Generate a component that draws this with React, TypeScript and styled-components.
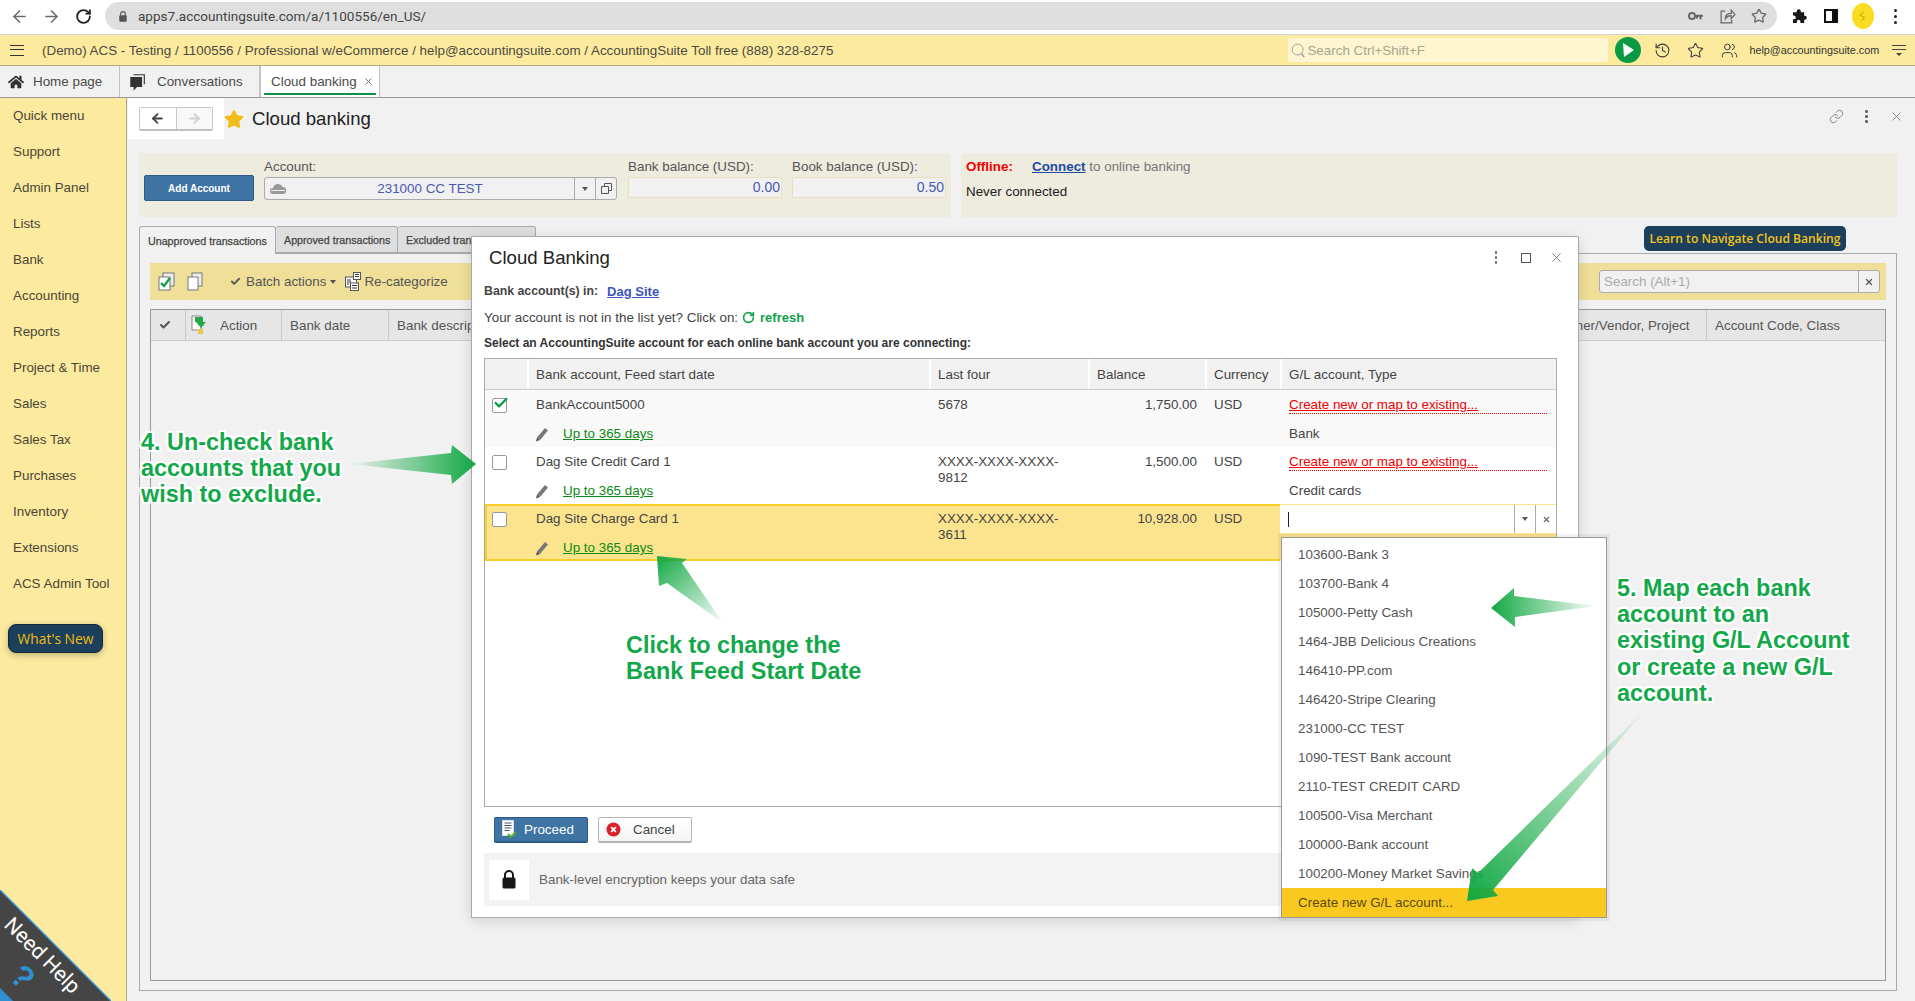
import { FC, ReactNode } from 'react'
import styled, { createGlobalStyle } from 'styled-components'
import { ArrowLeft, ArrowRight, Check, History, Link, RotateCw, Star, Users, X } from 'lucide-react'
import { FaHome, FaStar } from 'react-icons/fa'

const GlobalStyle = createGlobalStyle`
  html, body {
    margin: 0;
    padding: 0;
    background: #f1f1f1;
  }
  * { box-sizing: border-box; }
  body {
    font-family: "Liberation Sans", Arial, sans-serif;
    font-size: 13.4px;
    color: #444;
  }
`

const Page = styled.div`
  position: relative;
  width: 1915px;
  height: 1001px;
  display: flex;
  flex-direction: column;
  overflow: hidden;
`

/* browser chrome */
const BrowserBar = styled.div`
  height: 35px;
  flex: none;
  background: #fff;
  border-bottom: 1px solid #d4d4d4;
  display: flex;
  align-items: flex-start;
  padding: 2px 0 0 10px;
`
const NavIcon = styled.span<{ $w?: number; $dark?: boolean }>`
  width: ${(p) => p.$w ?? 32}px;
  height: 28px;
  flex: none;
  display: flex;
  align-items: center;
  justify-content: center;
  color: ${(p) => (p.$dark ? '#222' : '#6a6a6a')};
`
const NavIcons = styled.div`
  display: flex;
  width: 95px;
  flex: none;
  margin-left: -7px;
`
const AddressPill = styled.div`
  width: 1672px;
  height: 28px;
  flex: none;
  background: #dfdfdf;
  border-radius: 14px;
  display: flex;
  align-items: center;
  padding-left: 14px;
  margin-left: 7px;
`
const UrlText = styled.span`
  margin-left: 11px;
  font-size: 13.55px;
  font-family: Roboto, "Liberation Sans", sans-serif;
  color: #444;
`
const PillIcons = styled.div`
  margin-left: auto;
  display: flex;
  margin-right: 2px;
`
const ExtIcons = styled.div`
  display: flex;
  margin-left: 6px;
`
const SidePanelIcon = styled.span`
  width: 14px;
  height: 14px;
  border: 2.5px solid #111;
  border-right-width: 6px;
`
const Avatar = styled.span`
  width: 22px;
  height: 26px;
  border-radius: 50%;
  background: #fbdc22;
  display: flex;
  align-items: center;
  justify-content: center;
`
const KebabDots = styled.span<{ $color?: string; $size?: number }>`
  display: flex;
  flex-direction: column;
  gap: ${(p) => p.$size ?? 3}px;
  i {
    width: ${(p) => p.$size ?? 3}px;
    height: ${(p) => p.$size ?? 3}px;
    background: ${(p) => p.$color ?? '#222'};
    border-radius: 50%;
  }
`
const Kebab: FC<{ color?: string; size?: number }> = ({ color, size }) => (
  <KebabDots $color={color} $size={size}>
    <i />
    <i />
    <i />
  </KebabDots>
)

/* app top bar */
const TopBar = styled.div`
  height: 31px;
  flex: none;
  background: #fcea9f;
  border-bottom: 1px solid #aaa68c;
  display: flex;
  align-items: center;
  padding-left: 10px;
`
const Hamburger = styled.span`
  width: 14px;
  height: 11px;
  flex: none;
  border-top: 1.5px solid #333;
  border-bottom: 1.5px solid #333;
  position: relative;
  &::after {
    content: '';
    position: absolute;
    left: 0;
    right: 0;
    top: 3.5px;
    border-top: 1.5px solid #333;
  }
`
const TopText = styled.span`
  margin-left: 18px;
  white-space: nowrap;
  color: #4c4a3f;
`
const GlobalSearch = styled.div`
  margin-left: 455px;
  width: 320px;
  height: 24px;
  flex: none;
  background: #fdf6d1;
  border-radius: 2px;
  display: flex;
  align-items: center;
  padding-left: 3px;
  color: #a8a68f;
  gap: 1px;
`
const PlayButton = styled.span`
  width: 26px;
  height: 26px;
  margin-left: 7px;
  flex: none;
  border-radius: 50%;
  background: #0a9a46;
  display: flex;
  align-items: center;
  justify-content: center;
`
const TopIcon = styled.span<{ $gap?: number }>`
  margin-left: ${(p) => p.$gap ?? 16}px;
  flex: none;
  display: flex;
  color: #3c3c3c;
`
const TopEmail = styled.span`
  margin-left: 11px;
  font-size: 10.8px;
  color: #333;
  white-space: nowrap;
`
const MenuLines = styled.span`
  margin-left: 13px;
  width: 14px;
  flex: none;
  display: flex;
  flex-direction: column;
  align-items: center;
  gap: 3px;
  b {
    width: 14px;
    border-top: 1.2px solid #444;
  }
  i {
    border-left: 3px solid transparent;
    border-right: 3px solid transparent;
    border-top: 3px solid #444;
  }
`

/* page tabs */
const TabRow = styled.div`
  height: 32px;
  flex: none;
  background: #f1f1f1;
  border-bottom: 1px solid #999;
  display: flex;
`
const PageTab = styled.div<{ $w: number; $gap: number; $active?: boolean }>`
  width: ${(p) => p.$w}px;
  flex: none;
  border-right: 1px solid #c4c4c4;
  display: flex;
  align-items: center;
  gap: ${(p) => p.$gap}px;
  padding-left: 8px;
  position: relative;
  background: ${(p) => (p.$active ? '#fff' : 'transparent')};
  color: #4a4a4a;
  ${(p) =>
    p.$active &&
    `border-left: 1px solid #c4c4c4;
     padding-left: 10px;
     box-shadow: inset 3px 0 #fff, inset -3px 0 #fff, inset 0 -2px #fff, inset 0 -4px #0b9446;`}
`
const TabClose = styled.span`
  display: flex;
  color: #666;
`

const Body = styled.div`
  flex: 1;
  min-height: 0;
  display: flex;
`
const Sidebar = styled.nav`
  width: 127px;
  flex: none;
  background: #fcea9f;
  border-right: 1px solid #b3a878;
  padding-left: 13px;
`
const SideItem = styled.div`
  height: 36px;
  padding-bottom: 2px;
  display: flex;
  align-items: center;
  color: #4a4636;
`
const WhatsNew = styled.div`
  margin: 22px 0 0 -5px;
  width: 95px;
  height: 29px;
  border-radius: 8px;
  background: #1c3f5c;
  border: 1px solid #14293c;
  box-shadow: 0 2px 6px rgba(0, 0, 0, 0.25);
  color: #f0bd10;
  font-family: "Open Sans", sans-serif;
  font-weight: 500;
  font-size: 13.8px;
  display: flex;
  align-items: center;
  justify-content: center;
`
const NeedHelpCorner = styled.div`
  position: absolute;
  left: 0;
  bottom: 0;
  width: 111px;
  height: 111px;
  &::before {
    content: '';
    position: absolute;
    inset: 0;
    background: #454545;
    clip-path: polygon(0 0, 100% 100%, 0 100%);
  }
  &::after {
    content: '';
    position: absolute;
    left: 0;
    bottom: 0;
    width: 13px;
    height: 13px;
    background: #2f8fd3;
    clip-path: polygon(0 0, 100% 100%, 0 100%);
  }
`
const NeedHelpEdge = styled.svg`
  position: absolute;
  left: 0;
  top: 0;
`
const NeedHelpText = styled.span`
  position: absolute;
  left: 8px;
  top: 22px;
  line-height: 18px;
  transform-origin: 0 50%;
  transform: rotate(45deg);
  color: #fff;
  font-size: 21px;
  font-family: Roboto, sans-serif;
  white-space: nowrap;
`
const NeedHelpMark = styled.span`
  position: absolute;
  left: 13px;
  top: 71px;
  transform: rotate(45deg);
  color: #2f8fd3;
  font-size: 32px;
  font-weight: bold;
  line-height: 1;
`

const Main = styled.main`
  flex: 1;
  min-width: 0;
  display: flex;
  flex-direction: column;
  padding: 0 18px 10px 12px;
`
const TitleRow = styled.div`
  height: 55px;
  flex: none;
  display: flex;
  align-items: flex-start;
`
const BackBox = styled.div`
  width: 96px;
  height: 41px;
  margin-left: -11px;
  background: #fff;
  padding: 9px 0 0 11px;
  flex: none;
`
const BackGroup = styled.div`
  width: 74px;
  height: 24px;
  display: flex;
  background: #f8f8f8;
  border: 1px solid #c8c8c8;
  border-bottom: 2px solid #c0c0c0;
  border-radius: 2px;
`
const BackCell = styled.span<{ $off?: boolean }>`
  flex: 1;
  display: flex;
  align-items: center;
  justify-content: center;
  color: ${(p) => (p.$off ? '#d0d0d0' : '#444')};
  background: ${(p) => (p.$off ? 'transparent' : '#fff')};
  & + & {
    border-left: 1px solid #c8c8c8;
  }
`
const TitleStar = styled.span`
  margin: 11px 0 0 0;
  color: #f2bd1c;
  display: flex;
  flex: none;
`
const PageTitle = styled.h1`
  margin: 10px 0 0 8px;
  font-size: 18.6px;
  line-height: 22px;
  font-weight: normal;
  color: #222;
`
const TitleTools = styled.div`
  margin: 11px -7px 0 auto;
  display: flex;
  align-items: center;
  gap: 21.5px;
  color: #777;
`

const AccountRow = styled.div`
  height: 64px;
  flex: none;
  display: flex;
  gap: 10px;
`
const AccountPanel = styled.section`
  width: 812px;
  flex: none;
  background: #eeebdf;
  display: flex;
  padding: 4px 0 0 5px;
`
const AddAccountButton = styled.div`
  width: 110px;
  height: 26px;
  margin: 18px 10px 0 0;
  flex: none;
  background: #3f75a5;
  border: 1px solid #2c5a84;
  border-radius: 2px;
  color: #fff;
  font-size: 10px;
  font-weight: bold;
  display: flex;
  align-items: center;
  justify-content: center;
`
const Field = styled.div<{ $w: number; $gap?: number }>`
  width: ${(p) => p.$w}px;
  margin-right: ${(p) => p.$gap ?? 10}px;
  flex: none;
`
const FieldLabel = styled.div`
  height: 18px;
  line-height: 18px;
  margin: 1px 0;
  color: #555;
`
const AccountSelect = styled.div`
  height: 23px;
  display: flex;
  align-items: center;
  border: 1px solid #aaa;
  border-radius: 3px;
  background: #f1f1f1;
`
const CloudBadge = styled.span`
  width: 16px;
  margin-left: 5px;
  flex: none;
  display: flex;
  color: #888;
`
const AccountName = styled.span`
  flex: 1;
  text-align: center;
  color: #4a58b0;
  font-size: 13.4px;
`
const SelectCell = styled.span<{ $w: number }>`
  width: ${(p) => p.$w}px;
  height: 100%;
  flex: none;
  border-left: 1px solid #aaa;
  display: flex;
  align-items: center;
  justify-content: center;
  color: #666;
`
const Caret = styled.i`
  border-left: 3px solid transparent;
  border-right: 3px solid transparent;
  border-top: 4px solid #555;
`
const AmountBox = styled.div`
  height: 21px;
  background: #f1f1f1;
  border: 1px solid #e8e0bd;
  color: #4a58b0;
  font-size: 14px;
  line-height: 19px;
  text-align: right;
  padding-right: 1px;
`
const StatusPanel = styled.section`
  flex: 1;
  background: #eeebdf;
  padding: 5px 5px;
`
const StatusLine = styled.div`
  height: 18px;
  line-height: 18px;
  margin-bottom: 7px;
  color: #222;
`
const OfflineLabel = styled.span`
  color: #f00000;
  font-weight: bold;
  display: inline-block;
  width: 66px;
`
const ConnectLink = styled.a`
  color: #1d4aa3;
  font-weight: bold;
  text-decoration: underline;
`
const StatusHint = styled.span`
  color: #777;
`

const TabsLine = styled.div`
  height: 28px;
  margin-top: 9px;
  flex: none;
  display: flex;
  position: relative;
`
const DataTab = styled.div<{ $w: number; $active?: boolean }>`
  width: ${(p) => p.$w}px;
  flex: none;
  height: ${(p) => (p.$active ? 28 : 27)}px;
  border: 1px solid #aaa;
  border-left-width: ${(p) => (p.$active ? 1 : 0)}px;
  border-bottom-width: ${(p) => (p.$active ? 0 : 1)}px;
  border-radius: 3px 3px 0 0;
  background: ${(p) => (p.$active ? '#f1f1f1' : '#dedede')};
  position: relative;
  z-index: 1;
  display: flex;
  align-items: center;
  padding-left: 8px;
  font-size: 10.7px;
  -webkit-text-stroke: 0.25px #444;
  white-space: nowrap;
  overflow: hidden;
`
const LearnButton = styled.div`
  margin-left: auto;
  margin-right: 51px;
  width: 202px;
  height: 25px;
  background: #1c3f5c;
  border-radius: 5px;
  color: #f5c518;
  font-family: "Open Sans", sans-serif;
  font-weight: 600;
  font-size: 12.1px;
  display: flex;
  align-items: center;
  justify-content: center;
`
const ContentPanel = styled.section`
  flex: 1;
  min-height: 0;
  margin-top: -1px;
  border: 1px solid #aaa;
  padding: 9px 10px;
  display: flex;
  flex-direction: column;
`
const Toolbar = styled.div`
  height: 37px;
  flex: none;
  background: #f0df98;
  display: flex;
  align-items: center;
  padding-left: 8px;
  color: #555;
`
const ToolIcon = styled.span<{ $left?: number }>`
  margin-left: ${(p) => p.$left ?? 0}px;
  display: flex;
  flex: none;
`
const ToolText = styled.span<{ $left?: number }>`
  margin-left: ${(p) => p.$left ?? 0}px;
  white-space: nowrap;
`
const SearchBox = styled.div`
  margin-left: auto;
  margin-right: 6px;
  width: 281px;
  height: 23px;
  border: 1px solid #aaa;
  border-radius: 3px;
  background: #f1f1f1;
  display: flex;
  align-items: center;
  justify-content: space-between;
  color: #aaa;
  padding-left: 4px;
`
const SearchClear = styled.span`
  width: 21px;
  height: 100%;
  border-left: 1px solid #aaa;
  display: flex;
  align-items: center;
  justify-content: center;
  color: #555;
`
const DataFrame = styled.div`
  flex: 1;
  margin-top: 9px;
  border: 1px solid #999;
`
const DataHead = styled.div`
  height: 31px;
  display: grid;
  grid-template-columns: 34px 96px 107px 1fr 178px 179px;
  background: #e6e6e6;
  border-bottom: 1px solid #ccc;
  color: #555;
`
const DataHeadCell = styled.div<{ $first?: boolean; $tight?: boolean }>`
  display: flex;
  align-items: center;
  gap: 13px;
  padding-left: ${(p) => (p.$tight ? 5 : 8)}px;
  border-left: ${(p) => (p.$first ? 'none' : '1px solid #c9c9c9')};
`

/* cloud banking dialog */
const Dialog = styled.div`
  position: absolute;
  left: 471px;
  top: 236px;
  width: 1108px;
  height: 682px;
  z-index: 3;
  background: #fff;
  border: 1px solid #aaa;
  box-shadow: 0 3px 12px rgba(0, 0, 0, 0.14);
  padding: 0 21px 11px 12px;
  display: flex;
  flex-direction: column;
`
const DialogHead = styled.div`
  height: 41px;
  flex: none;
  display: flex;
  align-items: center;
  padding-left: 5px;
`
const DialogTitle = styled.h2`
  margin: 0;
  font-size: 18.6px;
  font-weight: normal;
  color: #222;
`
const DialogTools = styled.div`
  margin-left: auto;
  margin-right: -7px;
  display: flex;
  align-items: center;
  gap: 18px;
  color: #666;
`
const MaximizeBox = styled.span`
  width: 10px;
  height: 10px;
  margin-left: 6px;
  border: 1.3px solid #555;
`
const InfoLine = styled.div<{ $h: number; $strong?: boolean }>`
  height: ${(p) => p.$h}px;
  flex: none;
  display: flex;
  align-items: center;
  white-space: pre;
  font-size: ${(p) => (p.$strong ? 12 : 13.4)}px;
  font-weight: ${(p) => (p.$strong ? 'bold' : 'normal')};
  color: ${(p) => (p.$strong ? '#333' : '#444')};
`
const BankLabel = styled.span`
  font-size: 12.3px;
  font-weight: bold;
  color: #444;
`
const SiteLink = styled.a`
  color: #3d55c0;
  font-weight: bold;
  font-size: 13px;
  text-decoration: underline;
  margin-left: 9px;
`
const RefreshLink = styled.span`
  margin-left: 4px;
  color: #12a04a;
  font-weight: bold;
  font-size: 13px;
  display: flex;
  align-items: center;
  gap: 5px;
`
const BankTable = styled.div`
  flex: 1;
  min-height: 0;
  margin-top: 3px;
  border: 1px solid #aaa;
`
const columns = '42px 402px 159px 117px 75px 1fr'
const BankHead = styled.div`
  height: 31px;
  display: grid;
  grid-template-columns: ${columns};
  background: #f1f1f1;
  border-bottom: 1px solid #ccc;
`
const BankHeadCell = styled.div<{ $first?: boolean }>`
  display: flex;
  align-items: center;
  padding-left: 7px;
  border-left: ${(p) => (p.$first ? 'none' : '2px solid #fff')};
`
const BankRow = styled.div<{ $tone: 'plain' | 'soft' | 'selected' }>`
  height: 57px;
  display: grid;
  grid-template-columns: ${columns};
  background: ${(p) =>
    p.$tone === 'selected' ? '#fce48f' : p.$tone === 'soft' ? '#f9f9f9' : '#fff'};
  ${(p) =>
    p.$tone === 'selected' &&
    'box-shadow: inset 0 2px #f9cd2a, inset 0 -2px #f9cd2a, inset 2px 0 #f9cd2a;'}
`
const CheckCell = styled.div`
  padding: 8px 0 0 7px;
`
const CheckBox = styled.span`
  position: relative;
  display: block;
  width: 15px;
  height: 15px;
  background: #fff;
  border: 1px solid #999;
  border-radius: 2px;
`
const CheckTick = styled.span`
  position: absolute;
  left: 0;
  top: -4px;
  display: flex;
  color: #0c9c4a;
`
const BankCell = styled.div<{ $right?: boolean }>`
  padding: 7px ${(p) => (p.$right ? 8 : 10)}px 0 9px;
  line-height: 16px;
  text-align: ${(p) => (p.$right ? 'right' : 'left')};
`
const DateLine = styled.div`
  margin-top: 13px;
  margin-left: -1px;
  display: flex;
  align-items: center;
  gap: 14px;
  color: #777;
`
const DateLink = styled.a`
  color: #0a8a14;
  text-decoration: underline;
`
const MapLink = styled.div`
  height: 16px;
  border-bottom: 1px dotted #f00000;
  margin-right: -1px;
  box-sizing: content-box;
  color: #f00000;
  text-decoration: underline;
`
const GlType = styled.div`
  margin-top: 12px;
`
const GlEditCell = styled.div`
  background: #fce48f;
  position: relative;
`
const GlInput = styled.div`
  height: 28px;
  margin-top: 1px;
  background: #fff;
  display: flex;
  align-items: center;
  padding-left: 8px;
`
const Caretline = styled.span`
  width: 1px;
  height: 15px;
  background: #222;
`
const GlButton = styled.span<{ $left?: boolean }>`
  width: 21px;
  height: 100%;
  flex: none;
  border-left: 1px solid #aaa;
  margin-left: ${(p) => (p.$left ? 'auto' : 0)};
  display: flex;
  align-items: center;
  justify-content: center;
  color: #666;
`
const GlDropdown = styled.ul`
  position: absolute;
  left: 809px;
  top: 300px;
  width: 326px;
  height: 381px;
  margin: 0;
  padding: 2px 0 0;
  list-style: none;
  background: #fff;
  border: 1px solid #999;
  box-shadow: 0 0 0 3px rgba(0, 0, 0, 0.05);
  z-index: 2;
`
const GlOption = styled.li<{ $hot?: boolean }>`
  height: 29px;
  display: flex;
  align-items: center;
  padding-left: 16px;
  color: ${(p) => (p.$hot ? '#5b4a12' : '#555')};
  background: ${(p) => (p.$hot ? '#fac91f' : 'transparent')};
`
const FootButtons = styled.div`
  height: 26px;
  margin-top: 10px;
  flex: none;
  display: flex;
  gap: 10px;
  padding-left: 10px;
`
const FootButton = styled.div<{ $primary?: boolean }>`
  width: 94px;
  display: flex;
  align-items: center;
  gap: ${(p) => (p.$primary ? 7 : 12)}px;
  padding-left: 7px;
  border-radius: 2px;
  color: ${(p) => (p.$primary ? '#fff' : '#444')};
  background: ${(p) => (p.$primary ? '#3f75a5' : 'linear-gradient(#fff, #f4f4f4)')};
  border: 1px solid ${(p) => (p.$primary ? '#2c5a84' : '#b5b5b5')};
  border-bottom-width: 2px;
`
const SecureStrip = styled.div`
  height: 53px;
  margin-top: 10px;
  flex: none;
  background: #f3f3f3;
  display: flex;
  align-items: center;
  padding-left: 5px;
  gap: 10px;
  color: #666;
`
const LockBox = styled.span`
  width: 40px;
  height: 40px;
  background: #fff;
  display: flex;
  align-items: center;
  justify-content: center;
`

/* tutorial callouts */
const Callout = styled.div<{ $left: number; $top: number }>`
  position: absolute;
  left: ${(p) => p.$left}px;
  top: ${(p) => p.$top}px;
  z-index: 5;
  font-size: 23.4px;
  line-height: 26.2px;
  font-weight: bold;
  color: #12a84a;
  white-space: pre;
  text-shadow: 2px 0 #fff, -2px 0 #fff, 0 2px #fff, 0 -2px #fff, 2px 2px #fff, -2px 2px #fff,
    2px -2px #fff, -2px -2px #fff;
`
const ArrowLayer = styled.svg`
  position: absolute;
  left: 0;
  top: 0;
  z-index: 4;
  pointer-events: none;
`

const Icon: FC<{ w?: number; h?: number; box?: string; children: ReactNode }> = ({
  w = 16,
  h = 16,
  box = '0 0 16 16',
  children,
}) => (
  <svg width={w} height={h} viewBox={box}>
    {children}
  </svg>
)

const PadlockIcon: FC<{ w: number; h: number; color: string }> = ({ w, h, color }) => (
  <Icon w={w} h={h} box="0 0 14 19">
    <path d="M3 8V5a4 4 0 018 0v3" fill="none" stroke={color} strokeWidth="2" />
    <rect x="0.5" y="7.5" width="13" height="11" rx="1.5" fill={color} />
  </Icon>
)

const KeyIcon = () => (
  <Icon w={15} h={10} box="0 0 15 10">
    <circle cx="4" cy="5" r="3" fill="none" stroke="#666" strokeWidth="2" />
    <path d="M7 3.8h8v2h-1.5v2.4h-2V5.8H10v1.6H8V5.8H7z" fill="#666" />
  </Icon>
)

const ShareIcon = () => (
  <Icon w={17} h={17}>
    <path
      d="M6 3H2v11h10v-3M6 10c0-3.5 2-5 5.5-5V2L15 6l-3.5 4V7.2C9 7.2 7.3 8 6 10z"
      fill="none"
      stroke="#6a6a6a"
      strokeWidth="1.2"
    />
  </Icon>
)

const PuzzleIcon = () => (
  <Icon w={15} h={16}>
    <path
      d="M1 4h4V3a2.2 2.2 0 014.4 0v1H13v3.6h.6a2.2 2.2 0 010 4.4H13v3.5H9V14a1.9 1.9 0 00-3.8 0v1.5H1v-4h1a2 2 0 000-4H1z"
      fill="#181818"
    />
  </Icon>
)

const ChatIcon = () => (
  <Icon w={18} h={18}>
    <path d="M5 1h10v9h-1V2H5z" fill="#333" />
    <path d="M2 3.5h10.5v9H8l-3 3v-3H2z" fill="#333" />
  </Icon>
)

const DocsCheckIcon = () => (
  <Icon w={17} h={19} box="0 0 17 19">
    <rect x="5" y="1" width="11" height="13" fill="#eee" stroke="#777" />
    <rect x="1" y="5" width="11" height="13" fill="#fff" stroke="#777" />
    <path d="M3 11l3 3 6-8" fill="none" stroke="#0c9c4a" strokeWidth="2.2" />
  </Icon>
)

const DocsIcon = () => (
  <Icon w={16} h={19} box="0 0 16 19">
    <rect x="5" y="1" width="10" height="13" fill="#eee" stroke="#777" />
    <rect x="1" y="5" width="10" height="13" fill="#fff" stroke="#777" />
  </Icon>
)

const CategorizeIcon = () => (
  <Icon w={16} h={19} box="0 0 16 19">
    <rect x="0.5" y="5" width="11" height="10" fill="#fff" stroke="#555" />
    <rect x="8.5" y="0.5" width="7" height="7" fill="#fff" stroke="#555" />
    <rect x="5.5" y="11" width="8" height="7.5" fill="#fff" stroke="#555" />
    <path d="M2 8h4M2 10h4M2 12h2M10 2.5h4M10 4.5h4M7 13.5h5M7 16h5" stroke="#333" />
  </Icon>
)

const ActionIcon = () => (
  <Icon w={16} h={20} box="0 0 16 20">
    <path d="M1 1h9v14H1z" fill="#fff" stroke="#888" />
    <path d="M4 2h8v5h3l-5 6-5-6h-1z" fill="#25a84b" />
    <rect x="7" y="14" width="5" height="5" fill="#e8c84a" />
  </Icon>
)

const PencilIcon = () => (
  <Icon w={14} h={15} box="0 0 14 15">
    <path d="M10 1l3 2.5-8 9.5-3-2.5z" fill="#777" />
    <path d="M2 10.5l3 2.5-4 1.5z" fill="#555" />
  </Icon>
)

const ProceedIcon = () => (
  <Icon w={15} h={19} box="0 0 15 19">
    <rect x="0.5" y="0.5" width="11" height="15" fill="#fff" stroke="#ddd" />
    <path d="M2.5 3h7M2.5 5.5h7M2.5 8h7M2.5 10.5h5" stroke="#456" />
    <path d="M6 14l3 3 5-5" fill="none" stroke="#4cae2a" strokeWidth="2" />
  </Icon>
)

const CancelIcon = () => (
  <Icon w={15} h={15}>
    <circle cx="8" cy="8" r="7.5" fill="#d9222a" />
    <path d="M5.5 5.5l5 5M10.5 5.5l-5 5" stroke="#fff" strokeWidth="2" />
  </Icon>
)

const sideItems = [
  'Quick menu',
  'Support',
  'Admin Panel',
  'Lists',
  'Bank',
  'Accounting',
  'Reports',
  'Project & Time',
  'Sales',
  'Sales Tax',
  'Purchases',
  'Inventory',
  'Extensions',
  'ACS Admin Tool',
]

const glOptions = [
  '103600-Bank 3',
  '103700-Bank 4',
  '105000-Petty Cash',
  '1464-JBB Delicious Creations',
  '146410-PP.com',
  '146420-Stripe Clearing',
  '231000-CC TEST',
  '1090-TEST Bank account',
  '2110-TEST CREDIT CARD',
  '100500-Visa Merchant',
  '100000-Bank account',
  '100200-Money Market Savings',
  'Create new G/L account...',
]

const arrows = [
  { id: 'a1', points: '350,464 451,453 452,445 476,464 452,484 451,475', x1: 476, y1: 464, x2: 350, y2: 464 },
  { id: 'a2', points: '657,556 687,559 682,563 723,623 667,583 659,586', x1: 657, y1: 556, x2: 723, y2: 623 },
  { id: 'a3', points: '1491,608 1514,588 1514,596 1596,606 1515,617 1515,627', x1: 1491, y1: 608, x2: 1596, y2: 606 },
  { id: 'a4', points: '1645,710 1493,890 1498,896 1467,901 1472,868 1478,873', x1: 1467, y1: 901, x2: 1645, y2: 710 },
]

const App = () => (
  <Page>
    <GlobalStyle />
    <BrowserBar>
      <NavIcons>
        <NavIcon>
          <ArrowLeft size={19} />
        </NavIcon>
        <NavIcon>
          <ArrowRight size={19} />
        </NavIcon>
        <NavIcon $dark>
          <RotateCw size={17} strokeWidth={2.6} />
        </NavIcon>
      </NavIcons>
      <AddressPill>
        <PadlockIcon w={8} h={11} color="#555" />
        <UrlText>apps7.accountingsuite.com/a/1100556/en_US/</UrlText>
        <PillIcons>
          <NavIcon>
            <KeyIcon />
          </NavIcon>
          <NavIcon>
            <ShareIcon />
          </NavIcon>
          <NavIcon>
            <Star size={16} />
          </NavIcon>
        </PillIcons>
      </AddressPill>
      <ExtIcons>
        <NavIcon $dark>
          <PuzzleIcon />
        </NavIcon>
        <NavIcon $dark>
          <SidePanelIcon />
        </NavIcon>
        <NavIcon $dark>
          <Avatar>
            <Icon w={12} h={14}>
              <path d="M9 2L4 7l6 3-4 4" fill="none" stroke="#a08a10" strokeWidth="1" />
            </Icon>
          </Avatar>
        </NavIcon>
        <NavIcon $dark>
          <Kebab />
        </NavIcon>
      </ExtIcons>
    </BrowserBar>

    <TopBar>
      <Hamburger />
      <TopText>
        (Demo) ACS - Testing / 1100556 / Professional w/eCommerce / help@accountingsuite.com /
        AccountingSuite Toll free (888) 328-8275
      </TopText>
      <GlobalSearch>
        <Icon w={15} h={17}>
          <circle cx="7" cy="7" r="5.8" fill="none" stroke="#999" />
          <path d="M11 11l3 4" stroke="#999" strokeWidth="1.5" />
        </Icon>
        Search Ctrl+Shift+F
      </GlobalSearch>
      <PlayButton>
        <Icon w={14} h={16} box="0 0 14 16">
          <path d="M2 1l11 7-10 7z" fill="#fff" />
        </Icon>
      </PlayButton>
      <TopIcon $gap={13}>
        <History size={17} strokeWidth={1.5} />
      </TopIcon>
      <TopIcon $gap={16}>
        <Star size={17} strokeWidth={1.5} />
      </TopIcon>
      <TopIcon $gap={17}>
        <Users size={17} strokeWidth={1.4} />
      </TopIcon>
      <TopEmail>help@accountingsuite.com</TopEmail>
      <MenuLines>
        <b />
        <b />
        <i />
      </MenuLines>
    </TopBar>

    <TabRow>
      <PageTab $w={120} $gap={9}>
        <FaHome size={16} color="#333" />
        Home page
      </PageTab>
      <PageTab $w={140} $gap={11}>
        <ChatIcon />
        Conversations
      </PageTab>
      <PageTab $w={120} $gap={6} $active>
        Cloud banking
        <TabClose>
          <X size={11} />
        </TabClose>
      </PageTab>
    </TabRow>

    <Body>
      <Sidebar>
        {sideItems.map((item) => (
          <SideItem key={item}>{item}</SideItem>
        ))}
        <WhatsNew>What's New</WhatsNew>
      </Sidebar>

      <Main>
        <TitleRow>
          <BackBox>
            <BackGroup>
              <BackCell>
                <ArrowLeft size={15} strokeWidth={3} />
              </BackCell>
              <BackCell $off>
                <ArrowRight size={15} strokeWidth={3} />
              </BackCell>
            </BackGroup>
          </BackBox>
          <TitleStar>
            <FaStar size={20} />
          </TitleStar>
          <PageTitle>Cloud banking</PageTitle>
          <TitleTools>
            <Link size={15} strokeWidth={1.4} />
            <Kebab color="#666" size={2.5} />
            <X size={15} strokeWidth={1.3} />
          </TitleTools>
        </TitleRow>

        <AccountRow>
          <AccountPanel>
            <AddAccountButton>Add Account</AddAccountButton>
            <Field $w={353} $gap={11}>
              <FieldLabel>Account:</FieldLabel>
              <AccountSelect>
                <CloudBadge>
                  <Icon w={16} h={12} box="0 0 16 12">
                    <path d="M3 11a3 3 0 010-6 5 5 0 019.5-1A3.5 3.5 0 0113 11z" fill="#999" />
                    <path d="M1 7.5h14" stroke="#f1f1f1" />
                  </Icon>
                </CloudBadge>
                <AccountName>231000 CC TEST</AccountName>
                <SelectCell $w={21}>
                  <Caret />
                </SelectCell>
                <SelectCell $w={21}>
                  <Icon w={11} h={11} box="0 0 11 11">
                    <path d="M3.5 3V.5h7v7H8M.5 3.5h7v7h-7z" fill="none" stroke="#555" />
                  </Icon>
                </SelectCell>
              </AccountSelect>
            </Field>
            <Field $w={154}>
              <FieldLabel>Bank balance (USD):</FieldLabel>
              <AmountBox>0.00</AmountBox>
            </Field>
            <Field $w={154}>
              <FieldLabel>Book balance (USD):</FieldLabel>
              <AmountBox>0.50</AmountBox>
            </Field>
          </AccountPanel>
          <StatusPanel>
            <StatusLine>
              <OfflineLabel>Offline:</OfflineLabel>
              <ConnectLink>Connect</ConnectLink>
              <StatusHint> to online banking</StatusHint>
            </StatusLine>
            <StatusLine>Never connected</StatusLine>
          </StatusPanel>
        </AccountRow>

        <TabsLine>
          <DataTab $w={137} $active>
            Unapproved transactions
          </DataTab>
          <DataTab $w={122}>Approved transactions</DataTab>
          <DataTab $w={138}>Excluded transactions</DataTab>
          <LearnButton>Learn to Navigate Cloud Banking</LearnButton>
        </TabsLine>

        <ContentPanel>
          <Toolbar>
            <ToolIcon>
              <DocsCheckIcon />
            </ToolIcon>
            <ToolIcon $left={12}>
              <DocsIcon />
            </ToolIcon>
            <ToolIcon $left={27}>
              <Check size={11} strokeWidth={4} color="#555" />
            </ToolIcon>
            <ToolText $left={5}>Batch actions</ToolText>
            <ToolIcon $left={4}>
              <Caret />
            </ToolIcon>
            <ToolIcon $left={9}>
              <CategorizeIcon />
            </ToolIcon>
            <ToolText $left={3}>Re-categorize</ToolText>
            <SearchBox>
              Search (Alt+1)
              <SearchClear>
                <X size={10} strokeWidth={3} />
              </SearchClear>
            </SearchBox>
          </Toolbar>
          <DataFrame>
            <DataHead>
              <DataHeadCell $first>
                <Check size={12} strokeWidth={4} color="#555" />
              </DataHeadCell>
              <DataHeadCell $tight>
                <ActionIcon />
                Action
              </DataHeadCell>
              <DataHeadCell>Bank date</DataHeadCell>
              <DataHeadCell>Bank description</DataHeadCell>
              <DataHeadCell>Customer/Vendor, Project</DataHeadCell>
              <DataHeadCell>Account Code, Class</DataHeadCell>
            </DataHead>
          </DataFrame>
        </ContentPanel>
      </Main>
    </Body>

    <NeedHelpCorner>
      <NeedHelpEdge width={111} height={111}>
        <path d="M0 0L111 111" stroke="#3498db" strokeWidth="1.5" />
      </NeedHelpEdge>
      <NeedHelpText>Need Help</NeedHelpText>
      <NeedHelpMark>?</NeedHelpMark>
    </NeedHelpCorner>

    <Dialog>
      <DialogHead>
        <DialogTitle>Cloud Banking</DialogTitle>
        <DialogTools>
          <Kebab color="#666" size={2.5} />
          <MaximizeBox />
          <X size={15} strokeWidth={1.3} />
        </DialogTools>
      </DialogHead>
      <InfoLine $h={26}>
        <BankLabel>Bank account(s) in:</BankLabel>
        <SiteLink>Dag Site</SiteLink>
      </InfoLine>
      <InfoLine $h={27}>
        Your account is not in the list yet? Click on:
        <RefreshLink>
          <RotateCw size={13} strokeWidth={3} />
          refresh
        </RefreshLink>
      </InfoLine>
      <InfoLine $h={24} $strong>
        Select an AccountingSuite account for each online bank account you are connecting:
      </InfoLine>

      <BankTable>
        <BankHead>
          <BankHeadCell $first />
          <BankHeadCell>Bank account, Feed start date</BankHeadCell>
          <BankHeadCell>Last four</BankHeadCell>
          <BankHeadCell>Balance</BankHeadCell>
          <BankHeadCell>Currency</BankHeadCell>
          <BankHeadCell>G/L account, Type</BankHeadCell>
        </BankHead>

        <BankRow $tone="soft">
          <CheckCell>
            <CheckBox>
              <CheckTick>
                <Check size={16} strokeWidth={3.5} />
              </CheckTick>
            </CheckBox>
          </CheckCell>
          <BankCell>
            BankAccount5000
            <DateLine>
              <PencilIcon />
              <DateLink>Up to 365 days</DateLink>
            </DateLine>
          </BankCell>
          <BankCell>5678</BankCell>
          <BankCell $right>1,750.00</BankCell>
          <BankCell>USD</BankCell>
          <BankCell>
            <MapLink>Create new or map to existing...</MapLink>
            <GlType>Bank</GlType>
          </BankCell>
        </BankRow>

        <BankRow $tone="plain">
          <CheckCell>
            <CheckBox />
          </CheckCell>
          <BankCell>
            Dag Site Credit Card 1
            <DateLine>
              <PencilIcon />
              <DateLink>Up to 365 days</DateLink>
            </DateLine>
          </BankCell>
          <BankCell>
            XXXX-XXXX-XXXX-
            <br />
            9812
          </BankCell>
          <BankCell $right>1,500.00</BankCell>
          <BankCell>USD</BankCell>
          <BankCell>
            <MapLink>Create new or map to existing...</MapLink>
            <GlType>Credit cards</GlType>
          </BankCell>
        </BankRow>

        <BankRow $tone="selected">
          <CheckCell>
            <CheckBox />
          </CheckCell>
          <BankCell>
            Dag Site Charge Card 1
            <DateLine>
              <PencilIcon />
              <DateLink>Up to 365 days</DateLink>
            </DateLine>
          </BankCell>
          <BankCell>
            XXXX-XXXX-XXXX-
            <br />
            3611
          </BankCell>
          <BankCell $right>10,928.00</BankCell>
          <BankCell>USD</BankCell>
          <GlEditCell>
            <GlInput>
              <Caretline />
              <GlButton $left>
                <Caret />
              </GlButton>
              <GlButton>
                <X size={9} strokeWidth={3} />
              </GlButton>
            </GlInput>
          </GlEditCell>
        </BankRow>
      </BankTable>

      <FootButtons>
        <FootButton $primary>
          <ProceedIcon />
          Proceed
        </FootButton>
        <FootButton>
          <CancelIcon />
          Cancel
        </FootButton>
      </FootButtons>

      <SecureStrip>
        <LockBox>
          <PadlockIcon w={14} h={19} color="#181818" />
        </LockBox>
        Bank-level encryption keeps your data safe
      </SecureStrip>

      <GlDropdown>
        {glOptions.map((option, i) => (
          <GlOption key={option} $hot={i === glOptions.length - 1}>
            {option}
          </GlOption>
        ))}
      </GlDropdown>
    </Dialog>

    <ArrowLayer width={1915} height={1001} viewBox="0 0 1915 1001">
      <defs>
        {arrows.map((a) => (
          <linearGradient
            key={a.id}
            id={a.id}
            gradientUnits="userSpaceOnUse"
            x1={a.x1}
            y1={a.y1}
            x2={a.x2}
            y2={a.y2}
          >
            <stop offset="0" stopColor="#12a843" />
            <stop offset="1" stopColor="#12a843" stopOpacity="0.03" />
          </linearGradient>
        ))}
      </defs>
      {arrows.map((a) => (
        <polygon key={a.id} points={a.points} fill={`url(#${a.id})`} />
      ))}
    </ArrowLayer>

    <Callout $left={141} $top={429}>{'4. Un-check bank\naccounts that you\nwish to exclude.'}</Callout>
    <Callout $left={626} $top={632}>{'Click to change the\nBank Feed Start Date'}</Callout>
    <Callout $left={1617} $top={575}>
      {'5. Map each bank\naccount to an\nexisting G/L Account\nor create a new G/L\naccount.'}
    </Callout>
  </Page>
)

export default App
